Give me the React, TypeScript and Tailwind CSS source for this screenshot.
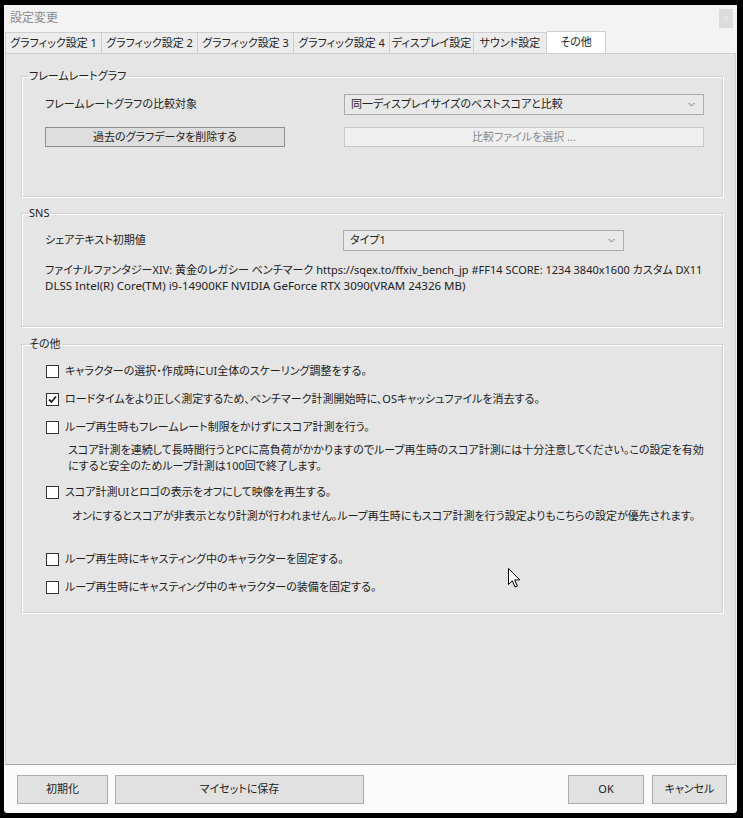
import React from 'react';

const tabs = [
    { label: 'グラフィック設定 1', w: 'w-[97px]' },
    { label: 'グラフィック設定 2', w: 'w-[96px]' },
    { label: 'グラフィック設定 3', w: 'w-[96px]' },
    { label: 'グラフィック設定 4', w: 'w-[96px]' },
    { label: 'ディスプレイ設定', w: 'w-[84px]' },
    { label: 'サウンド設定', w: 'w-[73px]' },
];

const Chevron = () => (
    <svg width="7" height="5" viewBox="0 0 7 5" className="shrink-0">
        <path d="M0.5 1 L3.5 4 L6.5 1" fill="none" stroke="#7a7a7a" strokeWidth="1" />
    </svg>
);

const Checkbox = ({ checked = false }: { checked?: boolean }) => (
    <span className="w-[13px] h-[13px] border border-[#333] bg-white flex items-center justify-center shrink-0">
        {checked && (
            <svg width="11" height="11" viewBox="0 0 11 11">
                <path d="M2 5.5 L4.5 8 L9 2.5" fill="none" stroke="#222" strokeWidth="1.8" />
            </svg>
        )}
    </span>
);

const Group = ({ title, className, children }: { title: string; className: string; children: React.ReactNode }) => (
    <fieldset className={`border border-[#d2d2d2] shadow-[inset_1px_1px_0_#ffffff,1px_1px_0_#ffffff] ml-[15px] mr-[12px] ${className}`}>
        <legend className="ml-[6px] px-[1px] h-[16px] leading-[16px]">{title}</legend>
        {children}
    </fieldset>
);

const CheckRow = ({ label, checked, className = '' }: { label: string; checked?: boolean; className?: string }) => (
    <div className={`flex items-center h-[28px] gap-[6px] ${className}`}>
        <Checkbox checked={checked} />
        <span>{label}</span>
    </div>
);

export default function App() {
    return (
        <div className="relative w-[743px] h-[818px] bg-black pt-[5px] pl-[4px] pr-[6px] pb-[5px] font-['Noto_Sans','Noto_Sans_CJK_JP',sans-serif] [font-feature-settings:'palt'] text-[11px] text-[#222]">
            <div className="h-full flex flex-col bg-[#f3f3f3] rounded-b-[4px] overflow-hidden">
                <div className="h-[26px] flex items-center justify-between pl-[6px] pr-[4px] shrink-0">
                    <span className="text-[#8a8a8a] text-[12px]">設定変更</span>
                    <span className="w-[14px] h-[19px] bg-[#dcdcdc] flex items-center justify-center text-[10px] text-[#eeeeee] leading-none">×</span>
                </div>
                <div className="h-[22px] flex items-end pl-[1px] shrink-0">
                    {tabs.map((t, i) => (
                        <div
                            key={t.label}
                            className={`${t.w} h-[21px] bg-[#ececec] border-t border-r border-[#cfcfcf] ${i === 0 ? 'border-l' : ''} flex items-center justify-center whitespace-nowrap`}
                        >
                            {t.label}
                        </div>
                    ))}
                    <div className="w-[59px] h-[22px] bg-white border-t border-r border-[#cfcfcf] flex items-center justify-center">その他</div>
                </div>
                <div className="flex-1 mx-[1px] bg-[#e5e5e5] border border-[#cfcfcf] border-b-[#a8a8a8] pt-[14px]">
                    <Group title="フレームレートグラフ" className="h-[129px]">
                        <div className="pl-[23px] pt-[10px]">
                            <div className="flex items-center">
                                <span className="w-[299px]">フレームレートグラフの比較対象</span>
                                <div className="w-[360px] h-[21px] bg-[#e9e9e9] border border-[#acacac] flex items-center justify-between pl-[6px] pr-[8px]">
                                    <span>同一ディスプレイサイズのベストスコアと比較</span>
                                    <Chevron />
                                </div>
                            </div>
                            <div className="flex items-center mt-[12px]">
                                <button type="button" className="w-[240px] h-[20px] bg-[#dedede] border border-[#8f8f8f] flex items-center justify-center">
                                    過去のグラフデータを削除する
                                </button>
                                <div className="w-[59px]" />
                                <button type="button" className="w-[360px] h-[20px] bg-[#efefef] border border-[#c8c8c8] text-[#8c8c8c] flex items-center justify-center">
                                    比較ファイルを選択 ...
                                </button>
                            </div>
                        </div>
                    </Group>
                    <Group title="SNS" className="h-[122px] mt-[8px]">
                        <div className="pl-[23px] pt-[9px]">
                            <div className="flex items-center">
                                <span className="w-[298px]">シェアテキスト初期値</span>
                                <div className="w-[281px] h-[21px] bg-[#e9e9e9] border border-[#acacac] flex items-center justify-between pl-[6px] pr-[8px]">
                                    <span>タイプ1</span>
                                    <Chevron />
                                </div>
                            </div>
                            <div className="mt-[11px] leading-[16px] whitespace-nowrap">
                                <div>ファイナルファンタジーXIV: 黄金のレガシー ベンチマーク https://sqex.to/ffxiv_bench_jp #FF14 SCORE: 1234 3840x1600 カスタム DX11</div>
                                <div className="text-[11.5px]">DLSS Intel(R) Core(TM) i9-14900KF NVIDIA GeForce RTX 3090(VRAM 24326 MB)</div>
                            </div>
                        </div>
                    </Group>
                    <Group title="その他" className="h-[277px] mt-[9px]">
                        <div className="pl-[24px] pt-[5px] whitespace-nowrap">
                            <CheckRow label="キャラクターの選択・作成時にUI全体のスケーリング調整をする。" />
                            <CheckRow label="ロードタイムをより正しく測定するため、ベンチマーク計測開始時に、OSキャッシュファイルを消去する。" checked />
                            <CheckRow label="ループ再生時もフレームレート制限をかけずにスコア計測を行う。" />
                            <div className="pl-[22px] pt-[1px] leading-[16px]">
                                <div>スコア計測を連続して長時間行うとPCに高負荷がかかりますのでループ再生時のスコア計測には十分注意してください。この設定を有効</div>
                                <div>にすると安全のためループ計測は100回で終了します。</div>
                            </div>
                            <CheckRow label="スコア計測UIとロゴの表示をオフにして映像を再生する。" className="mt-[4px]" />
                            <div className="pl-[26px] pt-[2px] leading-[16px]">
                                <div>オンにするとスコアが非表示となり計測が行われません。ループ再生時にもスコア計測を行う設定よりもこちらの設定が優先されます。</div>
                            </div>
                            <CheckRow label="ループ再生時にキャスティング中のキャラクターを固定する。" className="mt-[21px]" />
                            <CheckRow label="ループ再生時にキャスティング中のキャラクターの装備を固定する。" />
                        </div>
                    </Group>
                </div>
                <div className="h-[48px] shrink-0 bg-[#fbfbfb] flex items-center pl-[13px] pr-[10px] pt-[1px]">
                    <button type="button" className="w-[91px] h-[29px] bg-[#e1e1e1] border border-[#adadad]">初期化</button>
                    <button type="button" className="w-[249px] h-[29px] bg-[#e1e1e1] border border-[#adadad] ml-[7px]">マイセットに保存</button>
                    <div className="flex-1" />
                    <button type="button" className="w-[76px] h-[29px] bg-[#e1e1e1] border border-[#adadad]">OK</button>
                    <button type="button" className="w-[75px] h-[29px] bg-[#e1e1e1] border border-[#adadad] ml-[8px]">キャンセル</button>
                </div>
            </div>
            <svg width="13" height="21" viewBox="0 0 13 21" className="absolute left-[508px] top-[568px]">
                <path d="M0.5 0.5 L0.5 16.5 L4.3 12.8 L7 19 L9.3 18 L6.7 11.9 L11.8 11.9 Z" fill="#ffffff" stroke="#000000" strokeWidth="1" strokeLinejoin="miter" />
            </svg>
        </div>
    );
}
